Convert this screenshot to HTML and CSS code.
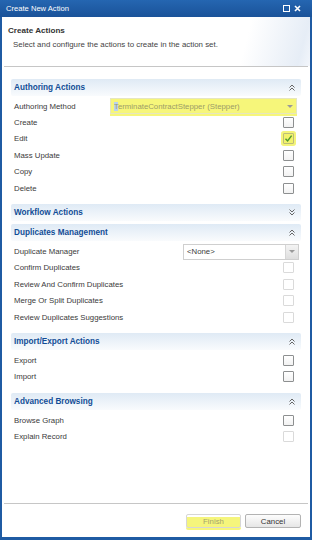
FILE: index.html
```html
<!DOCTYPE html>
<html lang="en">
<head>
    <meta charset="UTF-8">
    <meta name="viewport" content="width=device-width, initial-scale=1.0">
    <title>Create New Action</title>
    <link rel="stylesheet" href="styles.css">
</head>
<body>

    <div class="dialog">

        <!-- Title bar -->
        <div class="titlebar">
            <span class="title">Create New Action</span>
            <span class="win-btns">
                <span class="max-btn"></span>
                <svg class="close-btn" width="7" height="7" viewBox="0 0 7 7">
                    <path d="M1 1 L6 6 M6 1 L1 6" stroke="#fff" stroke-width="1.6"/>
                </svg>
            </span>
        </div>

        <!-- Header -->
        <div class="head">
            <div class="head-title">Create Actions</div>
            <div class="head-sub">Select and configure the actions to create in the action set.</div>
        </div>
        <div class="rule"></div>

        <div class="content">

            <!-- Authoring -->
            <div class="section">
                <div class="section-head">
                    <span>Authoring Actions</span>
                    <svg class="chev" width="6" height="7" viewBox="0 0 6 7"><path d="M0.5 3.5 L3 1 L5.5 3.5 M0.5 6.5 L3 4 L5.5 6.5" fill="none" stroke="#666" stroke-width="1"/></svg>
                </div>
                <div class="rows">
                    <div class="row">
                        <span>Authoring Method</span>
                        <div class="select select-wide marked">
                            <span class="select-text"><span class="caret-sel">T</span>erminateContractStepper (Stepper)</span>
                            <span class="arrow"></span>
                        </div>
                    </div>
                    <div class="row"><span>Create</span><span class="check"></span></div>
                    <div class="row"><span>Edit</span>
                        <span class="check checked">
                            <svg width="9" height="9" viewBox="0 0 9 9"><path d="M1.5 4.8 L3.6 7 L7.6 1.6" fill="none" stroke="#4f9a2c" stroke-width="1.4"/></svg>
                        </span>
                    </div>
                    <div class="row"><span>Mass Update</span><span class="check"></span></div>
                    <div class="row"><span>Copy</span><span class="check"></span></div>
                    <div class="row"><span>Delete</span><span class="check"></span></div>
                </div>
            </div>

            <!-- Workflow (collapsed) -->
            <div class="section">
                <div class="section-head">
                    <span>Workflow Actions</span>
                    <svg class="chev" width="6" height="7" viewBox="0 0 6 7"><path d="M0.5 0.5 L3 3 L5.5 0.5 M0.5 3.5 L3 6 L5.5 3.5" fill="none" stroke="#666" stroke-width="1"/></svg>
                </div>
            </div>

            <!-- Duplicates -->
            <div class="section">
                <div class="section-head">
                    <span>Duplicates Management</span>
                    <svg class="chev" width="6" height="7" viewBox="0 0 6 7"><path d="M0.5 3.5 L3 1 L5.5 3.5 M0.5 6.5 L3 4 L5.5 6.5" fill="none" stroke="#666" stroke-width="1"/></svg>
                </div>
                <div class="rows">
                    <div class="row">
                        <span>Duplicate Manager</span>
                        <div class="select select-short">
                            <span class="select-text">&lt;None&gt;</span>
                            <span class="arrow arrow-box"></span>
                        </div>
                    </div>
                    <div class="row"><span>Confirm Duplicates</span><span class="check disabled"></span></div>
                    <div class="row"><span>Review And Confirm Duplicates</span><span class="check disabled"></span></div>
                    <div class="row"><span>Merge Or Split Duplicates</span><span class="check disabled"></span></div>
                    <div class="row"><span>Review Duplicates Suggestions</span><span class="check disabled"></span></div>
                </div>
            </div>

            <!-- Import / Export -->
            <div class="section">
                <div class="section-head">
                    <span>Import/Export Actions</span>
                    <svg class="chev" width="6" height="7" viewBox="0 0 6 7"><path d="M0.5 3.5 L3 1 L5.5 3.5 M0.5 6.5 L3 4 L5.5 6.5" fill="none" stroke="#666" stroke-width="1"/></svg>
                </div>
                <div class="rows">
                    <div class="row"><span>Export</span><span class="check"></span></div>
                    <div class="row"><span>Import</span><span class="check"></span></div>
                </div>
            </div>

            <!-- Advanced browsing -->
            <div class="section">
                <div class="section-head">
                    <span>Advanced Browsing</span>
                    <svg class="chev" width="6" height="7" viewBox="0 0 6 7"><path d="M0.5 3.5 L3 1 L5.5 3.5 M0.5 6.5 L3 4 L5.5 6.5" fill="none" stroke="#666" stroke-width="1"/></svg>
                </div>
                <div class="rows">
                    <div class="row"><span>Browse Graph</span><span class="check"></span></div>
                    <div class="row"><span>Explain Record</span><span class="check disabled"></span></div>
                </div>
            </div>

        </div>

        <div class="rule"></div>

        <!-- Footer buttons -->
        <div class="footer">
            <button class="btn btn-finish" disabled>Finish</button>
            <button class="btn">Cancel</button>
        </div>

    </div>

</body>
</html>
```

FILE: styles.css
```css
/* page */
body {
    margin: 0;
    background: #ffffff;
    font-family: "Liberation Sans", Arial, sans-serif;
    font-size: 7.8px;
    color: #3a3a3a;
}

/* dialog frame */
.dialog {
    width: 312px;
    height: 540px;
    box-sizing: border-box;
    border: 2px solid #1f5ba3;
    border-top: none;
    border-bottom-width: 3px;
    display: flex;
    flex-direction: column;
    background: #fff;
}

/* title bar */
.titlebar {
    height: 17px;
    margin: 0 -2px;
    padding: 0 11px 0 6px;
    background: linear-gradient(#2566b1, #1a5299);
    color: #fff;
    display: flex;
    align-items: center;
    justify-content: space-between;
    font-size: 7.6px;
}

.win-btns {
    display: flex;
    align-items: center;
    gap: 4px;
}

.max-btn {
    width: 5px;
    height: 5px;
    border: 1.3px solid #fff;
}

/* header */
.head {
    height: 49px;
    box-sizing: border-box;
    padding: 8px 6px 0 6px;
    background: linear-gradient(105deg, #fff 78%, #e6edf6 96%, #f3f6fb 100%);
}

.head-title {
    font-weight: bold;
    font-size: 8.1px;
    line-height: 11px;
    color: #333;
}

.head-sub {
    margin-top: 3px;
    padding-left: 5px;
    font-size: 7.9px;
    line-height: 11px;
    color: #444;
}

.rule {
    height: 1px;
    margin: 0 2px;
    background: #c6c6c6;
}

/* content area */
.content {
    flex: 1;
    padding: 12px 9px 0 9px;
}

.section {
    margin-bottom: 3px;
}

.section-head {
    height: 17px;
    padding: 0 6px 0 3px;
    border-radius: 2px;
    background: linear-gradient(#dfeaf5, #f9fbfd);
    display: flex;
    align-items: center;
    justify-content: space-between;
    font-weight: bold;
    font-size: 8.2px;
    color: #124d96;
}

.rows {
    padding: 2px 0 5px 0;
}

.row {
    height: 16.4px;
    padding: 0 7px 0 3px;
    display: flex;
    align-items: center;
    justify-content: space-between;
}

/* checkboxes */
.check {
    width: 11px;
    height: 11px;
    box-sizing: border-box;
    border: 1px solid #8d8f90;
    border-radius: 1px;
    background: linear-gradient(#fff, #f2f2f2);
    display: flex;
    align-items: center;
    justify-content: center;
}

.check.disabled {
    border-color: #dadada;
    background: #fff;
}

.check.checked {
    background: #f2f26c;
    border-color: #bcbc7a;
    box-shadow: 0 0 0 2px #f4f47a;
}

/* dropdowns */
.select {
    height: 16px;
    box-sizing: border-box;
    border: 1px solid #cfcfcf;
    display: flex;
    align-items: center;
    justify-content: space-between;
    background: #fff;
}

.select-wide {
    width: 187px;
    margin-right: -3px;
}

.select-short {
    width: 116px;
    margin-right: -5px;
}

.select.marked {
    background: #f6f67a;
    border-color: #e6e6c0;
    box-shadow: 0 2px 0 #f6f67a;
}

.select-text {
    padding-left: 3px;
}

.marked .select-text {
    color: #9c9c68;
}

.caret-sel {
    background: #b9d2f0;
}

.arrow {
    width: 12px;
    height: 100%;
    display: flex;
    align-items: center;
    justify-content: center;
}

.arrow::after {
    content: "";
    border-left: 3px solid transparent;
    border-right: 3px solid transparent;
    border-top: 3px solid #9a9a9a;
}

.arrow-box {
    border-left: 1px solid #d6d6d6;
    background: linear-gradient(#f4f4f4, #dedede);
}

/* footer */
.footer {
    height: 33px;
    box-sizing: border-box;
    padding: 10px 9px 0 0;
    display: flex;
    justify-content: flex-end;
    align-items: flex-start;
    gap: 4px;
}

.btn {
    height: 14px;
    padding: 0;
    border: 1px solid #b3b3b3;
    border-radius: 2px;
    background: linear-gradient(#fdfdfd, #e6e6e6);
    font-family: "Liberation Sans", Arial, sans-serif;
    font-size: 7.8px;
    color: #333;
    width: 56px;
}

.btn-finish {
    width: 55px;
    color: #a3a36c;
    border-color: #d6d6d6;
    background: linear-gradient(#ffffff 20%, #f5f57c 20%);
    box-shadow: 0 2px 0 #f5f57c;
}
```
